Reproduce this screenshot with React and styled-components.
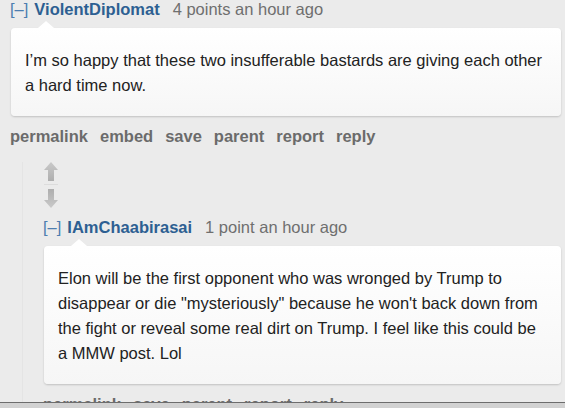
import React from 'react'
import styled, { createGlobalStyle } from 'styled-components'

const Global = createGlobalStyle`
body {
  margin: 0;
  background: #ebebeb;
  font-family: "Liberation Sans", Arial, sans-serif;
  overflow: hidden;
}
`;

const Page = styled.div`
width: 565px;
height: 408px;
position: relative;
overflow: hidden;
`;

const Comment = styled.div`
padding-left: ${p => p.indent || 10}px;
padding-right: 4px;
`;

const Tagline = styled.div`
display: flex;
align-items: center;
gap: 13px;
height: 19px;
font-size: 16.5px;
line-height: 19px;
`;

const Toggle = styled.span`
color: #4d7eb0;
`;

const Author = styled.span`
color: #2d5f92;
font-weight: bold;
margin-left: -7px;
`;

const Meta = styled.span`
color: #6f6f6f;
`;

const Card = styled.div`
position: relative;
margin-top: 9px;
margin-left: 1px;
padding: 20px 14px 18px;
background: linear-gradient(#ffffff, #f6f6f6);
border-radius: 4px;
box-shadow: 0 1px 2px rgba(0, 0, 0, 0.18);
color: #222;
font-size: 16.5px;
line-height: 25px;

&::before {
  content: "";
  position: absolute;
  left: 27px;
  top: -7px;
  border-left: 8px solid transparent;
  border-right: 8px solid transparent;
  border-bottom: 7px solid #fff;
}
`;

const Actions = styled.div`
display: flex;
gap: 12px;
margin-top: 11px;
font-size: 16.5px;
line-height: 19px;
font-weight: bold;
color: #6b6b6b;
`;

const Children = styled.div`
margin-left: 22px;
margin-top: 16px;
border-left: 1px solid #e4e4e4;
`;

const Votes = styled.div`
display: flex;
flex-direction: column;
align-items: flex-start;
gap: 6px;
padding-left: 21px;
margin-bottom: 10px;
`;

const VoteDivider = styled.div`
width: 14px;
height: 1px;
background: #dcdcdc;
margin: -3px 0 -2px;
`;

const Arrow = ({ down }) => (
  <svg width="14" height="19" viewBox="0 0 14 19" style={{ transform: down ? 'rotate(180deg)' : 'none' }}>
    <defs>
      <linearGradient id="ag" x1="0" y1="0" x2="0" y2="1">
        <stop offset="0" stopColor="#c9c9c9" />
        <stop offset="1" stopColor="#aeaeae" />
      </linearGradient>
    </defs>
    <path d="M7 0 L14 8 L10 8 L10 19 L4 19 L4 8 L0 8 Z" fill="url(#ag)" />
  </svg>
);

const BottomBar = styled.div`
position: absolute;
left: 0;
right: 0;
top: 402px;
height: 6px;
border-top: 1px solid #6d6d6d;
background: #d2d2d2;
`;

function App() {
  return (
    <Page>
      <Global />
      <Comment>
        <Tagline>
          <Toggle>[–]</Toggle>
          <Author>ViolentDiplomat</Author>
          <Meta>4 points an hour ago</Meta>
        </Tagline>
        <Card>
          I’m so happy that these two insufferable bastards are giving each other a hard time now.
        </Card>
        <Actions>
          <span>permalink</span>
          <span>embed</span>
          <span>save</span>
          <span>parent</span>
          <span>report</span>
          <span>reply</span>
        </Actions>
      </Comment>
      <Children>
        <Votes>
          <Arrow />
          <VoteDivider />
          <Arrow down />
        </Votes>
        <Comment indent={20}>
          <Tagline>
            <Toggle>[–]</Toggle>
            <Author>IAmChaabirasai</Author>
            <Meta>1 point an hour ago</Meta>
          </Tagline>
          <Card>
            Elon will be the first opponent who was wronged by Trump to disappear or die "mysteriously" because he won't back down from the fight or reveal some real dirt on Trump. I feel like this could be a MMW post. Lol
          </Card>
          <Actions>
            <span>permalink</span>
            <span>save</span>
            <span>parent</span>
            <span>report</span>
            <span>reply</span>
          </Actions>
        </Comment>
      </Children>
      <BottomBar />
    </Page>
  )
}

export default App
